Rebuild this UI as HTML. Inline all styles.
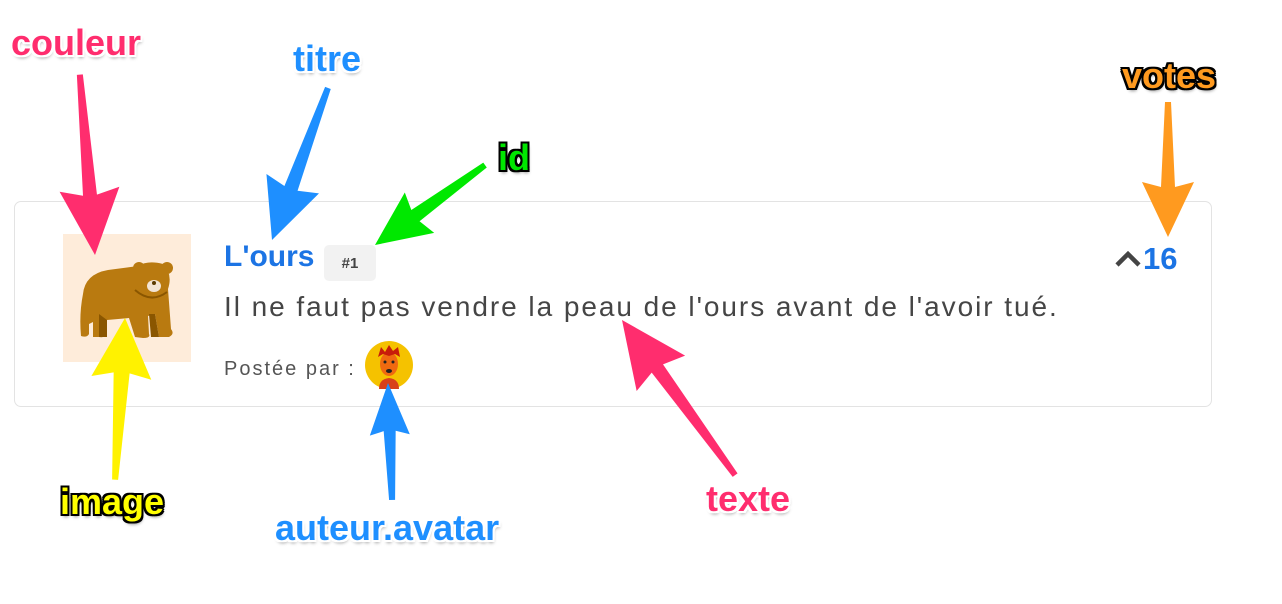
<!DOCTYPE html>
<html><head><meta charset="utf-8"><style>
body{margin:0;width:1282px;height:604px;background:#fff;position:relative;overflow:hidden;font-family:"Liberation Sans",sans-serif}
.a{position:absolute}
.card{left:14px;top:201px;width:1196px;height:204px;border:1.5px solid #e3e3e3;border-radius:7px}
.img{left:63px;top:234px;width:128px;height:128px;background:#feecda}
.title{left:224px;top:240px;font-size:30px;font-weight:bold;color:#1c74e4}
.badge{left:324px;top:245px;width:52px;height:36px;background:#f2f2f2;border-radius:5px;font-size:15px;font-weight:bold;color:#444;text-align:center;line-height:38px}
.txt{left:224px;top:291px;font-size:28px;color:#454545;letter-spacing:1.95px;white-space:nowrap}
.post{left:224px;top:358px;font-size:20px;color:#555;letter-spacing:2px}
.votes{left:1143px;top:241px;font-size:31px;font-weight:bold;color:#1c74e4}
.lab{font-weight:bold;font-size:36px;letter-spacing:0}
.w{text-shadow:-2px -2px 0 #fff,2px -2px 0 #fff,-2px 2px 0 #fff,2px 2px 0 #fff,0 2px 0 #fff,0 -2px 0 #fff,2px 0 0 #fff,-2px 0 0 #fff,1px 3px 3px rgba(0,0,0,.35)}
.k{text-shadow:-2px -2px 0 #000,2px -2px 0 #000,-2px 2px 0 #000,2px 2px 0 #000,0 2px 0 #000,0 -2px 0 #000,2px 0 0 #000,-2px 0 0 #000,1px 3px 3px rgba(0,0,0,.4)}
</style></head><body>
<div class="a card"></div>
<div class="a img"><svg width="128" height="128" viewBox="0 0 128 128">
<path d="M20 60 Q22 40 45 36 L75 32 Q85 26 100 30 Q110 40 105 55 L108 95 Q112 100 106 103 L96 103 L92 80 L85 82 L86 100 Q88 104 80 104 L72 103 L66 84 L44 86 L44 100 Q42 104 36 103 L30 103 L30 88 L26 90 L26 100 Q24 104 18 102 Q16 80 20 60Z" fill="#b97a10"/>
<path d="M36 80 L44 86 L44 103 L36 103Z M86 80 L92 80 L96 103 L88 103Z" fill="#8a5600"/>
<circle cx="76" cy="34" r="6" fill="#b97a10"/><circle cx="104" cy="34" r="6" fill="#b97a10"/>
<circle cx="90" cy="46" r="16" fill="#b97a10"/>
<ellipse cx="91" cy="52" rx="7" ry="6" fill="#f2e4d4"/><circle cx="91" cy="49" r="2" fill="#5a3a00"/>
<path d="M72 56 Q88 70 104 58" stroke="#8a5600" stroke-width="2" fill="none"/>
</svg></div>
<div class="a title">L'ours</div>
<div class="a badge">#1</div>
<div class="a txt">Il ne faut pas vendre la peau de l'ours avant de l'avoir tué.</div>
<div class="a post">Postée par :</div>
<svg class="a" style="left:365px;top:341px" width="48" height="48" viewBox="0 0 48 48">
<circle cx="24" cy="24" r="24" fill="#f5c200"/>
<path d="M14 48 Q14 38 24 37 Q34 38 34 48Z" fill="#d8401a"/>
<ellipse cx="24" cy="23" rx="9" ry="12" fill="#f06a10"/>
<path d="M13 16 L16 6 L20 11 L24 4 L28 10 L33 6 L35 16 L30 13 L24 15 L18 13Z" fill="#c81d0a"/>
<circle cx="20" cy="21" r="1.5" fill="#222"/><circle cx="28" cy="21" r="1.5" fill="#222"/>
<ellipse cx="24" cy="30" rx="3" ry="2" fill="#222"/>
</svg>
<svg class="a" style="left:1114px;top:250px" width="30" height="18"><path d="M3 15 L14 4 L25 15" stroke="#444" stroke-width="4.5" fill="none"/></svg>
<div class="a votes">16</div>

<svg class="a" style="left:0;top:0" width="1282" height="604">
<g fill="#ff2d6e"><polygon transform="translate(95,255) rotate(-4.8)" points="-3,-181 3,-181 7,-60 30,-66 0,0 -30,-66 -7,-60"/>
<polygon transform="translate(622,320) rotate(143.9)" points="-3,-192 3,-192 7,-60 30,-66 0,0 -30,-66 -7,-60"/></g>
<g fill="#1e8fff"><polygon transform="translate(272,240) rotate(20.2)" points="-3,-162 3,-162 7,-55 28,-60 0,0 -28,-60 -7,-55"/>
<polygon transform="translate(388,383) rotate(178)" points="-3,-117 3,-117 6,-48 20,-52 0,0 -20,-52 -6,-48"/></g>
<polygon fill="#00e800" transform="translate(375,245) rotate(54)" points="-3,-136 3,-136 7,-50 25,-55 0,0 -25,-55 -7,-50"/>
<polygon fill="#ff9a1f" transform="translate(1168,237) rotate(0)" points="-3,-135 3,-135 7,-50 26,-55 0,0 -26,-55 -7,-50"/>
<polygon fill="#fff200" transform="translate(125,318) rotate(-176.5)" points="-3,-162 3,-162 8,-55 30,-60 0,0 -30,-60 -8,-55"/>
</svg>
<div class="a lab w" style="left:11px;top:22px;color:#ff2d6e">couleur</div>
<div class="a lab w" style="left:293px;top:38px;color:#1e8fff">titre</div>
<div class="a lab k" style="left:498px;top:137px;color:#00e600">id</div>
<div class="a lab k" style="left:1122px;top:55px;color:#ff9a1f">votes</div>
<div class="a lab k" style="left:60px;top:481px;color:#ffff00">image</div>
<div class="a lab w" style="left:275px;top:507px;color:#1e8fff">auteur.avatar</div>
<div class="a lab w" style="left:706px;top:478px;color:#ff2d6e">texte</div>
</body></html>
